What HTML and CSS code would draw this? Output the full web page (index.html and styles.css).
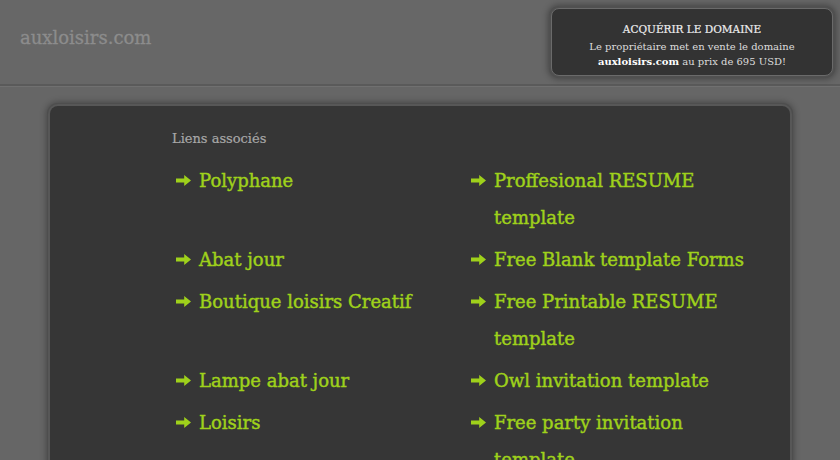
FILE: index.html
```html
<!DOCTYPE html>
<html lang="fr">
<head>
<meta charset="utf-8">
<title>auxloisirs.com</title>
<link rel="stylesheet" href="styles.css">
</head>
<body>
<header class="top">
  <div class="brand">auxloisirs.com</div>
  <div class="sale">
    <div class="sale-title">ACQUÉRIR LE DOMAINE</div>
    <div class="sale-line">Le propriétaire met en vente le domaine</div>
    <div class="sale-line"><b>auxloisirs.com</b> au prix de 695 USD!</div>
  </div>
</header>
<main class="panel">
  <div class="inner">
    <div class="label">Liens associés</div>
    <ul class="links">
      <li><svg class="arr" viewBox="0 0 15 13"><path d="M0 4.6 H8.2 V1 L15 6.5 L8.2 12 V8.4 H0 Z"/></svg><a href="#">Polyphane</a></li>
      <li><svg class="arr" viewBox="0 0 15 13"><path d="M0 4.6 H8.2 V1 L15 6.5 L8.2 12 V8.4 H0 Z"/></svg><a href="#">Proffesional RESUME template</a></li>
      <li><svg class="arr" viewBox="0 0 15 13"><path d="M0 4.6 H8.2 V1 L15 6.5 L8.2 12 V8.4 H0 Z"/></svg><a href="#">Abat jour</a></li>
      <li><svg class="arr" viewBox="0 0 15 13"><path d="M0 4.6 H8.2 V1 L15 6.5 L8.2 12 V8.4 H0 Z"/></svg><a href="#">Free Blank template Forms</a></li>
      <li><svg class="arr" viewBox="0 0 15 13"><path d="M0 4.6 H8.2 V1 L15 6.5 L8.2 12 V8.4 H0 Z"/></svg><a href="#">Boutique loisirs Creatif</a></li>
      <li><svg class="arr" viewBox="0 0 15 13"><path d="M0 4.6 H8.2 V1 L15 6.5 L8.2 12 V8.4 H0 Z"/></svg><a href="#">Free Printable RESUME template</a></li>
      <li><svg class="arr" viewBox="0 0 15 13"><path d="M0 4.6 H8.2 V1 L15 6.5 L8.2 12 V8.4 H0 Z"/></svg><a href="#">Lampe abat jour</a></li>
      <li><svg class="arr" viewBox="0 0 15 13"><path d="M0 4.6 H8.2 V1 L15 6.5 L8.2 12 V8.4 H0 Z"/></svg><a href="#">Owl invitation template</a></li>
      <li><svg class="arr" viewBox="0 0 15 13"><path d="M0 4.6 H8.2 V1 L15 6.5 L8.2 12 V8.4 H0 Z"/></svg><a href="#">Loisirs</a></li>
      <li><svg class="arr" viewBox="0 0 15 13"><path d="M0 4.6 H8.2 V1 L15 6.5 L8.2 12 V8.4 H0 Z"/></svg><a href="#">Free party invitation template</a></li>
    </ul>
  </div>
</main>
</body>
</html>
```
FILE: styles.css
```css
html, body {
  margin: 0;
  padding: 0;
  background: #666666;
  font-family: "DejaVu Serif", "Liberation Serif", serif;
  overflow: hidden;
  height: 460px;
}
.top {
  height: 84px;
  background: #676767;
  border-bottom: 2px solid #5a5a5a;
  box-shadow: 0 1px 0 #707070;
  display: flex;
  justify-content: space-between;
  align-items: flex-start;
  padding: 0 7px 0 20px;
}
.brand {
  margin-top: 27px;
  font-size: 18px;
  color: #8c8c8c;
  -webkit-text-stroke: 0.3px #8c8c8c;
}
.sale {
  margin-top: 8px;
  width: 282px;
  height: 68px;
  background: #333333;
  border: 1px solid #6a6a6a;
  border-radius: 8px;
  box-shadow: 0 0 0 2px #505050, 0 0 6px 3px rgba(0,0,0,0.35);
  text-align: center;
  color: #dddddd;
  font-size: 10px;
  padding-top: 13px;
  box-sizing: border-box;
}
.sale-title {
  color: #eeeeee;
  font-size: 10.5px;
  line-height: 15px;
  margin-bottom: 2px;
  -webkit-text-stroke: 0.2px #eeeeee;
}
.sale-line {
  line-height: 15px;
}
.sale-line b {
  color: #ffffff;
}
.panel {
  width: 740px;
  margin: 18px auto 0;
  background: #363636;
  border: 2px solid #575757;
  border-bottom: none;
  border-radius: 10px 10px 0 0;
  box-shadow: 0 0 0 1px #4e4e4e, 0 0 6px 2px rgba(0,0,0,0.3);
  height: 400px;
}
.inner {
  padding: 24px 0 0 122px;
}
.label {
  font-size: 13px;
  color: #a8a8a8;
  line-height: 18px;
  margin-bottom: 14px;
  -webkit-text-stroke: 0.2px #a8a8a8;
}
.links {
  list-style: none;
  margin: 0;
  padding: 0;
  display: grid;
  grid-template-columns: 295px 295px;
  row-gap: 5px;
}
.links li {
  display: flex;
  align-items: flex-start;
  font-size: 18px;
  line-height: 37px;
  color: #9fd11b;
}
.arr {
  width: 15px;
  height: 13px;
  flex: none;
  margin: 12px 8px 0 4px;
  fill: #9fd11b;
}
.links a {
  max-width: 262px;
  color: #9fd11b;
  text-decoration: none;
  -webkit-text-stroke: 0.45px #9fd11b;
}
```
